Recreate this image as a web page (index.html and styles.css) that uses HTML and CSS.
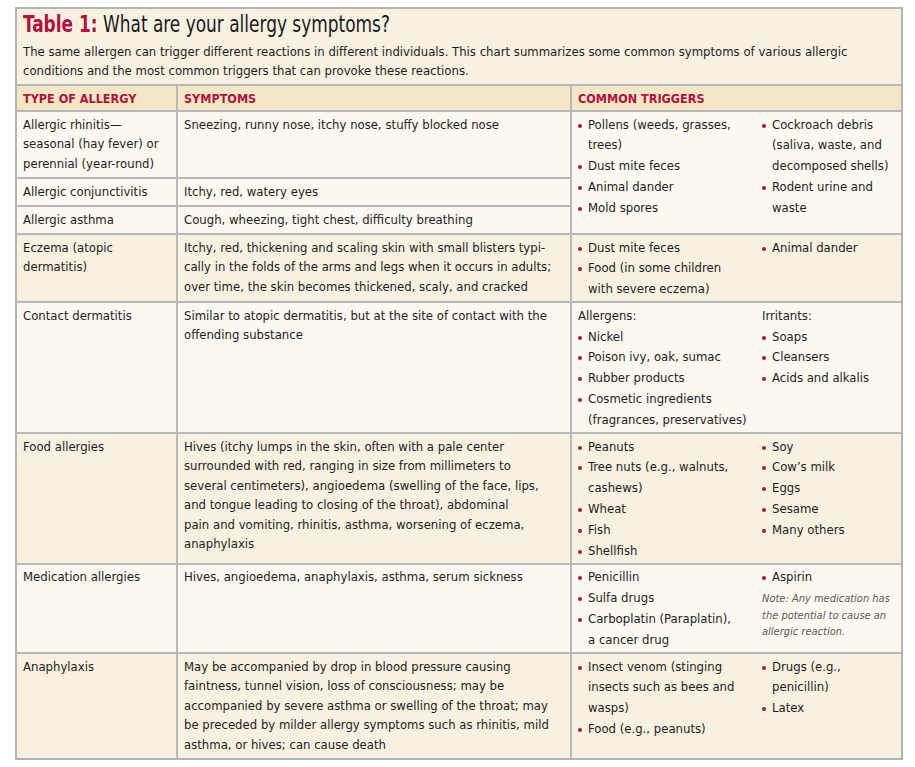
FILE: index.html
```html
<!DOCTYPE html>
<html lang="en">
<head>
<meta charset="utf-8">
<title>Table 1: What are your allergy symptoms?</title>
<link rel="stylesheet" href="styles.css">
</head>
<body>
<div class="panel">
  <div class="intro">
    <h1 class="title"><span class="label">Table 1:</span> What are your allergy symptoms?</h1>
    <p class="lead">The same allergen can trigger different reactions in different individuals. This chart summarizes some common symptoms of various allergic<br>conditions and the most common triggers that can provoke these reactions.</p>
  </div>
  <table class="allergy">
    <colgroup>
      <col class="c-type">
      <col class="c-sym">
      <col class="c-trig">
    </colgroup>
    <thead>
      <tr class="head">
        <th>TYPE OF ALLERGY</th>
        <th>SYMPTOMS</th>
        <th>COMMON TRIGGERS</th>
      </tr>
    </thead>
    <tbody>
      <tr class="light">
        <td>Allergic rhinitis—<br>seasonal (hay fever) or<br>perennial (year-round)</td>
        <td>Sneezing, runny nose, itchy nose, stuffy blocked nose</td>
        <td rowspan="3" class="trig">
          <div class="cols">
            <ul>
              <li>Pollens (weeds, grasses,<br>trees)</li>
              <li>Dust mite feces</li>
              <li>Animal dander</li>
              <li>Mold spores</li>
            </ul>
            <ul>
              <li>Cockroach debris<br>(saliva, waste, and<br>decomposed shells)</li>
              <li>Rodent urine and<br>waste</li>
            </ul>
          </div>
        </td>
      </tr>
      <tr class="light">
        <td>Allergic conjunctivitis</td>
        <td>Itchy, red, watery eyes</td>
      </tr>
      <tr class="light">
        <td>Allergic asthma</td>
        <td>Cough, wheezing, tight chest, difficulty breathing</td>
      </tr>
      <tr class="beige">
        <td>Eczema (atopic<br>dermatitis)</td>
        <td>Itchy, red, thickening and scaling skin with small blisters typi-<br>cally in the folds of the arms and legs when it occurs in adults;<br>over time, the skin becomes thickened, scaly, and cracked</td>
        <td class="trig">
          <div class="cols">
            <ul>
              <li>Dust mite feces</li>
              <li>Food (in some children<br>with severe eczema)</li>
            </ul>
            <ul>
              <li>Animal dander</li>
            </ul>
          </div>
        </td>
      </tr>
      <tr class="light">
        <td>Contact dermatitis</td>
        <td>Similar to atopic dermatitis, but at the site of contact with the<br>offending substance</td>
        <td class="trig">
          <div class="cols">
            <div>
              <div class="sub">Allergens:</div>
              <ul>
                <li>Nickel</li>
                <li>Poison ivy, oak, sumac</li>
                <li>Rubber products</li>
                <li>Cosmetic ingredients<br>(fragrances, preservatives)</li>
              </ul>
            </div>
            <div>
              <div class="sub">Irritants:</div>
              <ul>
                <li>Soaps</li>
                <li>Cleansers</li>
                <li>Acids and alkalis</li>
              </ul>
            </div>
          </div>
        </td>
      </tr>
      <tr class="beige">
        <td>Food allergies</td>
        <td>Hives (itchy lumps in the skin, often with a pale center<br>surrounded with red, ranging in size from millimeters to<br>several centimeters), angioedema (swelling of the face, lips,<br>and tongue leading to closing of the throat), abdominal<br>pain and vomiting, rhinitis, asthma, worsening of eczema,<br>anaphylaxis</td>
        <td class="trig">
          <div class="cols">
            <ul>
              <li>Peanuts</li>
              <li>Tree nuts (e.g., walnuts,<br>cashews)</li>
              <li>Wheat</li>
              <li>Fish</li>
              <li>Shellfish</li>
            </ul>
            <ul>
              <li>Soy</li>
              <li>Cow’s milk</li>
              <li>Eggs</li>
              <li>Sesame</li>
              <li>Many others</li>
            </ul>
          </div>
        </td>
      </tr>
      <tr class="light">
        <td>Medication allergies</td>
        <td>Hives, angioedema, anaphylaxis, asthma, serum sickness</td>
        <td class="trig">
          <div class="cols">
            <ul>
              <li>Penicillin</li>
              <li>Sulfa drugs</li>
              <li>Carboplatin (Paraplatin),<br>a cancer drug</li>
            </ul>
            <div>
              <ul>
                <li>Aspirin</li>
              </ul>
              <p class="note">Note: Any medication has<br>the potential to cause an<br>allergic reaction.</p>
            </div>
          </div>
        </td>
      </tr>
      <tr class="beige">
        <td>Anaphylaxis</td>
        <td>May be accompanied by drop in blood pressure causing<br>faintness, tunnel vision, loss of consciousness; may be<br>accompanied by severe asthma or swelling of the throat; may<br>be preceded by milder allergy symptoms such as rhinitis, mild<br>asthma, or hives; can cause death</td>
        <td class="trig">
          <div class="cols">
            <ul>
              <li>Insect venom (stinging<br>insects such as bees and<br>wasps)</li>
              <li>Food (e.g., peanuts)</li>
            </ul>
            <ul>
              <li>Drugs (e.g.,<br>penicillin)</li>
              <li>Latex</li>
            </ul>
          </div>
        </td>
      </tr>
    </tbody>
  </table>
</div>
</body>
</html>
```

FILE: styles.css
```css
* {
  box-sizing: border-box;
}

body {
  margin: 0;
  background: #ffffff;
  font-family: "DejaVu Sans Condensed", "DejaVu Sans", sans-serif;
  color: #1f1c1d;
}

.panel {
  width: 888px;
  margin: 7px 0 0 15px;
  border: 2px solid #b4b4b4;
  background: #f7f1e2;
}

.intro {
  padding: 2px 8px 0 6px;
  height: 75px;
}

.title {
  margin: 0;
  font-size: 23px;
  font-weight: normal;
  line-height: 26px;
  color: #1a1a1a;
  white-space: nowrap;
  transform: scaleX(0.82);
  transform-origin: left center;
}

.label {
  font-weight: bold;
  color: #b3103f;
}

.lead {
  margin: 6px 0 0;
  font-size: 13px;
  line-height: 18.5px;
  white-space: nowrap;
}

.allergy {
  width: 100%;
  border-collapse: collapse;
  table-layout: fixed;
  font-size: 13px;
}

.c-type { width: 160px; }
.c-sym { width: 394px; }
.c-trig { width: auto; }

.allergy th,
.allergy td {
  border: 2px solid #b9b9b9;
  text-align: left;
  vertical-align: top;
  white-space: nowrap;
}

.allergy tr > :first-child { border-left: 0; }
.allergy tr > :last-child { border-right: 0; }
.allergy tbody tr:last-child > * { border-bottom: 0; }

.allergy th {
  background: #f3e6c4;
  color: #b3103f;
  font-weight: bold;
  font-size: 12.5px;
  line-height: 18px;
  padding: 4px 6px 2px;
}

.allergy td {
  padding: 2.5px 6px 4px;
  line-height: 19.5px;
}

.light > td { background: #fbf8f1; }
.beige > td { background: #f7f1e2; }

.allergy td.trig {
  padding: 2.5px 6px 1.5px;
  line-height: 20.8px;
}

.cols {
  display: grid;
  grid-template-columns: 184px 1fr;
}

.cols ul {
  list-style: none;
  margin: 0;
  padding: 0;
}

.cols li {
  position: relative;
  padding-left: 10px;
}

.cols li::before {
  content: "";
  position: absolute;
  left: 0;
  top: 9px;
  width: 4px;
  height: 4px;
  border-radius: 50%;
  background: #b3103f;
}

.sub {
  line-height: 20.8px;
}

.note {
  margin: 3px 0 0;
  font-size: 11px;
  font-style: italic;
  line-height: 16.5px;
  color: #5a5a5a;
}
```
